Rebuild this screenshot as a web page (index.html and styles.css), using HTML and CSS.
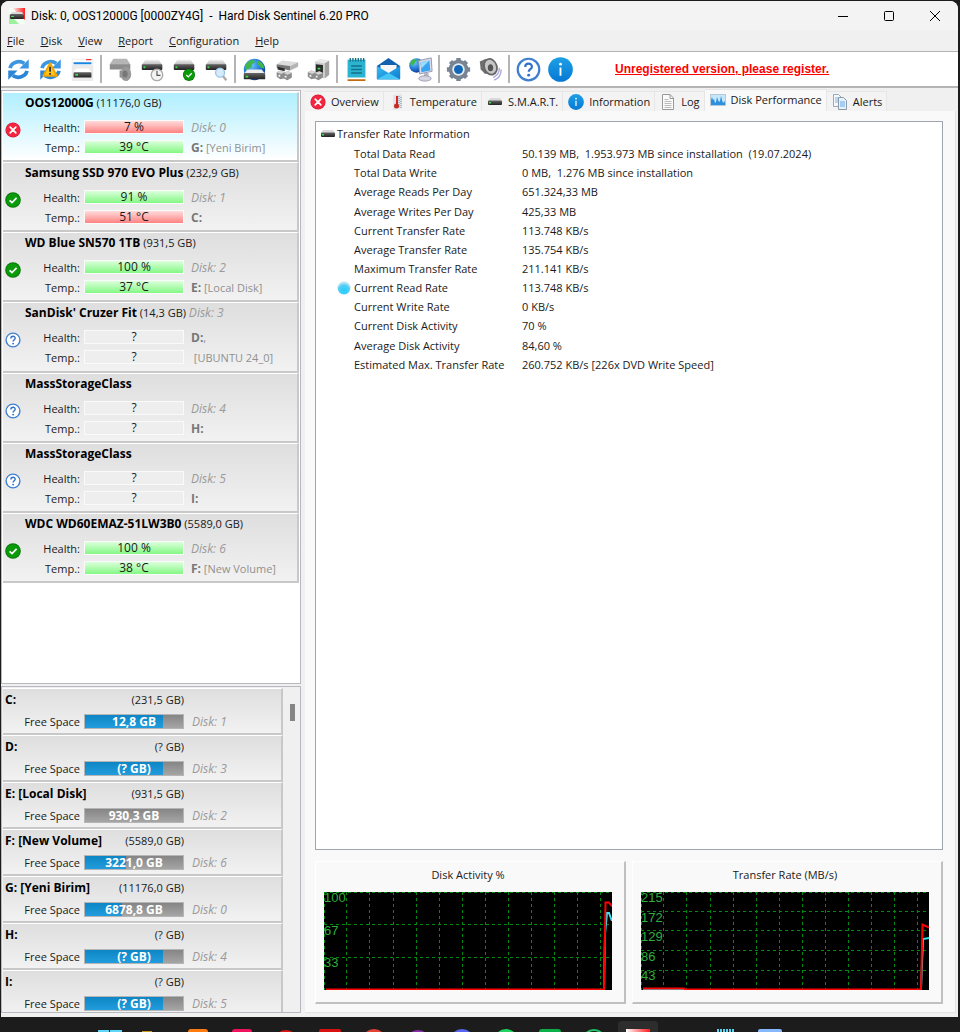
FILE: index.html
```html
<!DOCTYPE html>
<html lang="en">
<head>
  <meta charset="UTF-8">
  <meta name="viewport" content="width=device-width, initial-scale=1.0">
  <title>Hard Disk Sentinel 6.20 PRO</title>
  <link rel="stylesheet" href="styles.css">
</head>
<body>

<!-- Shared icons -->
<svg class="sprite" aria-hidden="true">
  <defs>
    <linearGradient id="gMetal" x1="0" y1="0" x2="0" y2="1"><stop offset="0" stop-color="#f2f2f2"/><stop offset="1" stop-color="#b5b5b5"/></linearGradient>
    <linearGradient id="gDark" x1="0" y1="0" x2="0" y2="1"><stop offset="0" stop-color="#666"/><stop offset="1" stop-color="#222"/></linearGradient>
    <linearGradient id="gBlue" x1="0" y1="0" x2="0" y2="1"><stop offset="0" stop-color="#1ea0e6"/><stop offset="1" stop-color="#0678d4"/></linearGradient>
    <linearGradient id="gMail" x1="0" y1="0" x2="1" y2="1"><stop offset="0" stop-color="#35bdf2"/><stop offset="1" stop-color="#1079d0"/></linearGradient>
    <linearGradient id="gRed" x1="0" y1="0" x2="1" y2="0"><stop offset="0" stop-color="#fff"/><stop offset="1" stop-color="#ff1a1a"/></linearGradient>
    <radialGradient id="gGlobe" cx="0.35" cy="0.3" r="0.8"><stop offset="0" stop-color="#6cc8ff"/><stop offset="0.6" stop-color="#1b6fd0"/><stop offset="1" stop-color="#0a2f80"/></radialGradient>
    <radialGradient id="gOrb" cx="0.5" cy="0.7" r="0.6"><stop offset="0" stop-color="#1fd0ff"/><stop offset="0.7" stop-color="#55cdf5"/><stop offset="1" stop-color="#b6e3f2"/></radialGradient>
  </defs>

  <symbol id="i-fail" viewBox="0 0 16 16">
    <circle cx="8" cy="8" r="7.6" fill="#d81f3a"/><circle cx="8" cy="8" r="6.8" fill="#f4263f"/>
    <path d="M5.2 5.2l5.6 5.6M10.8 5.2l-5.6 5.6" stroke="#fff" stroke-width="1.7" stroke-linecap="round"/>
  </symbol>
  <symbol id="i-ok" viewBox="0 0 16 16">
    <circle cx="8" cy="8" r="7.8" fill="#067a06"/><circle cx="8" cy="8" r="6.8" fill="#0a9a0a"/>
    <path d="M4.6 8.3l2.4 2.3 4.6-4.7" fill="none" stroke="#fff" stroke-width="1.7"/>
  </symbol>
  <symbol id="i-help" viewBox="0 0 16 16">
    <circle cx="8" cy="8" r="6.9" fill="#fff" stroke="#3f7fd0" stroke-width="1.4"/>
    <path d="M5.9 6.4c0-2.9 4.3-2.8 4.3-.2 0 1.5-2.1 1.7-2.1 3.3" fill="none" stroke="#3070c8" stroke-width="1.4"/>
    <circle cx="8.1" cy="11.6" r=".95" fill="#3070c8"/>
  </symbol>
  <symbol id="i-info" viewBox="0 0 16 16">
    <circle cx="8" cy="8" r="7.9" fill="url(#gBlue)"/>
    <circle cx="8" cy="4.6" r=".9" fill="#fff"/><path d="M8 6.7v5.3" stroke="#fff" stroke-width="1.2"/>
  </symbol>
  <symbol id="i-bay" viewBox="0 0 16 16">
    <path d="M3 4h10l2 3h-14z" fill="#d9d9d9"/><rect x="1" y="6.5" width="14" height="4.5" rx="1" fill="url(#gDark)"/>
    <rect x="2" y="8" width="2" height="1.5" fill="#39e04a"/>
  </symbol>
  <symbol id="i-refresh" viewBox="0 0 28 28">
    <path d="M4.5 12.5A10 9 0 0 1 20.5 7.3" fill="none" stroke="#3d97e0" stroke-width="4.2"/>
    <path d="M25.5 2.5v10.500h-10.500z" fill="#3d97e0"/>
    <path d="M23.5 15.5A10 9 0 0 1 7.5 20.7" fill="none" stroke="#2b86d6" stroke-width="4.2"/>
    <path d="M2.5 25.5v-10.500h10.500z" fill="#2b86d6"/>
  </symbol>
  <symbol id="i-drive" viewBox="0 0 28 28">
    <path d="M6 3h15l4 6h-23z" fill="url(#gMetal)"/><rect x="2" y="8" width="23" height="6.5" rx="1" fill="url(#gDark)"/>
    <rect x="4" y="10.5" width="2" height="2" fill="#39e04a"/>
  </symbol>
  <symbol id="i-globe" viewBox="0 0 28 28">
    <circle cx="14" cy="14" r="12" fill="url(#gGlobe)"/>
    <path d="M4 9c4-7 9-6 10-5 1 3-3 3-3 6s-3 1-4 4-4-1-3-5zM17 4c5 1 8 5 8 9l-4-1c-1-3-5-3-4-8z" fill="#41b649"/>
  </symbol>
  <symbol id="i-plugs" viewBox="0 0 28 28">
    <path d="M3 8l6-4 18 2-9 4z" fill="#dcdcdc"/><path d="M3 8l15 2v5l-15-3z" fill="#777"/><path d="M18 10l9-4v5l-9 4z" fill="#b4b4b4"/>
    <path d="M4 11l8 2v3l-8-2z" fill="#2a2a2a"/>
    <path d="M3 17l4-2 5 2 4-1 4 2v5l-5 3-4-2-4 1-4-3z" fill="#8d8d8d"/><path d="M3 17l4-2 5 2-4 2zM11 18l5-2 4 2-5 2z" fill="#d5d5d5"/>
    <path d="M5 20h2v2h-2zM12 21h2v2h-2z" fill="#f4f4f4"/>
  </symbol>
</svg>

<div class="window">
  <header class="titlebar">
    <svg class="app-icon" viewBox="0 0 16 16">
      <rect width="16" height="16" fill="#f4fff4"/><path d="M3 0h13v12z" fill="url(#gRed)"/><path d="M0 6v10h10z" fill="#9df09d"/>
      <path d="M3 4h10l2 3h-14z" fill="#d9d9d9"/><rect x="1" y="6" width="14" height="5" rx="1" fill="url(#gDark)"/><rect x="2" y="8" width="3" height="1" fill="#39e04a"/>
    </svg>
    <h1>Disk: 0, OOS12000G [0000ZY4G] &nbsp;-&nbsp; Hard Disk Sentinel 6.20 PRO</h1>
    <div class="controls">
      <button type="button" aria-label="Minimize"><svg viewBox="0 0 10 10"><path d="M0 5.5h10"/></svg></button>
      <button type="button" aria-label="Maximize"><svg viewBox="0 0 10 10"><rect x=".5" y=".5" width="9" height="9" rx="1"/></svg></button>
      <button type="button" aria-label="Close"><svg viewBox="0 0 10 10"><path d="M0 0l10 10M10 0l-10 10"/></svg></button>
    </div>
  </header>

  <nav class="menubar">
    <button type="button"><u>F</u>ile</button>
    <button type="button"><u>D</u>isk</button>
    <button type="button"><u>V</u>iew</button>
    <button type="button"><u>R</u>eport</button>
    <button type="button"><u>C</u>onfiguration</button>
    <button type="button"><u>H</u>elp</button>
  </nav>

  <div class="toolbar">
    <button type="button" aria-label="Refresh"><svg><use href="#i-refresh"/></svg></button>
    <button type="button" aria-label="Refresh all">
      <svg viewBox="0 0 28 28"><use href="#i-refresh"/><path d="M13.5 7l7.5 14h-15z" fill="#ffc61a" stroke="#f0a500" stroke-width="2" stroke-linejoin="round"/><path d="M13.5 11v5.5M13.5 18v2" stroke="#333" stroke-width="2"/></svg>
    </button>
    <button type="button" aria-label="Disk panel">
      <svg viewBox="0 0 28 28"><rect x="2" y="2" width="24" height="25" rx="1" fill="#ebebeb"/><rect x="3" y="3" width="22" height="6" fill="#fff"/><path d="M4 7h20" stroke="#1a86e0" stroke-width="2"/><path d="M18 3h6" stroke="#e33" stroke-width="1.5"/><path d="M7 13h14l3 4h-20z" fill="#fff"/><rect x="4" y="17" width="20" height="6" rx="1" fill="url(#gDark)"/><path d="M6 20h3" stroke="#39e04a" stroke-width="2"/></svg>
    </button>
    <span class="sep"></span>
    <button type="button" aria-label="Disk sound">
      <svg viewBox="0 0 28 28"><path d="M6 2h15l4 6h-23z" fill="#b5b5b5"/><rect x="2" y="8" width="23" height="6" fill="#8c8c8c"/><path d="M13 15h4l5-4v16l-5-4h-4z" fill="#8a8a8a"/><ellipse cx="20" cy="19" rx="6" ry="8" fill="#999"/><ellipse cx="19" cy="19" rx="3" ry="4" fill="#777"/></svg>
    </button>
    <button type="button" aria-label="Short self test">
      <svg viewBox="0 0 28 28"><use href="#i-drive"/><circle cx="19" cy="20" r="6.5" fill="#f4f4f4" stroke="#aaa" stroke-width="1.5"/><path d="M19 15.5v5h4" fill="none" stroke="#555" stroke-width="1.3"/></svg>
    </button>
    <button type="button" aria-label="Extended self test">
      <svg viewBox="0 0 28 28"><use href="#i-drive"/><use href="#i-ok" x="12" y="13" width="14" height="14"/></svg>
    </button>
    <button type="button" aria-label="Surface test">
      <svg viewBox="0 0 28 28"><use href="#i-drive"/><path d="M21 21l4 5" stroke="#aaa" stroke-width="2.5"/><circle cx="18" cy="17.5" r="5" fill="#d5edfb" stroke="#9cc4e4" stroke-width="1.5"/></svg>
    </button>
    <span class="sep"></span>
    <button type="button" aria-label="Network disks">
      <svg viewBox="0 0 28 28"><use href="#i-globe"/><path d="M6 14h16l4 5h-24z" fill="#eee"/><rect x="2" y="18" width="24" height="7" rx="1" fill="url(#gDark)"/><path d="M4 22h3" stroke="#39e04a" stroke-width="2"/></svg>
    </button>
    <button type="button" aria-label="Connect"><svg><use href="#i-plugs"/></svg></button>
    <button type="button" aria-label="Disconnect">
      <svg viewBox="0 0 28 28"><path d="M10 5l6-3 10 2-5 3z" fill="#e8e8e8"/><path d="M10 5l11 2v17l-11-3z" fill="#cfcfcf"/><path d="M21 7l5-3v16l-5 4z" fill="#a2a2a2"/><path d="M11 8l8 1v9l-8-1z" fill="#2a2a2a"/><path d="M13 13h3" stroke="#39e04a" stroke-width="2"/><path d="M2 17l4-2 5 2 4-1 4 2v5l-5 3-4-2-4 1-4-3z" fill="#8d8d8d"/><path d="M2 17l4-2 5 2-4 2zM10 18l5-2 4 2-5 2z" fill="#d5d5d5"/><path d="M4 20h2v2h-2zM11 21h2v2h-2z" fill="#f4f4f4"/></svg>
    </button>
    <span class="sep"></span>
    <button type="button" aria-label="Report">
      <svg viewBox="0 0 28 28"><rect x="4" y="3" width="20" height="21" fill="#2bb3cf"/><path d="M4 23h20v2h-20z" fill="#fff"/><path d="M4 26h20" stroke="#c46b12" stroke-width="2"/><path d="M7 1v4M10 1v4M13 1v4M16 1v4M19 1v4M22 1v4" stroke="#146c86" stroke-width="1.5"/><path d="M8 10h12M8 14h12M8 18h12" stroke="#12718c" stroke-width="1.7"/></svg>
    </button>
    <button type="button" aria-label="Send report">
      <svg viewBox="0 0 28 28"><path d="M1 10l13-9 13 9v15h-26z" fill="#1262ae"/><path d="M5 9h18v9h-18z" fill="#f7f7f7"/><path d="M1 10l13 8 13-8v15h-26z" fill="url(#gMail)"/><path d="M1 25l13-7 13 7z" fill="#45c7f5"/></svg>
    </button>
    <button type="button" aria-label="Online">
      <svg viewBox="0 0 28 28"><use href="#i-globe" width="19" height="19"/><path d="M12 4l14-3 1 15-14 3z" fill="#dcdce8" stroke="#8f8fae"/><path d="M14 6l10-2 1 11-10 2z" fill="#38a5f2"/><path d="M14 6l10-2-9 9z" fill="#9adcff"/><path d="M18 18h5v4h-5z" fill="#b5b5c8"/><ellipse cx="19" cy="24" rx="7" ry="3" fill="#d5d5e2" stroke="#9898ad"/></svg>
    </button>
    <span class="sep"></span>
    <button type="button" aria-label="Settings">
      <svg viewBox="0 0 28 28"><path d="M14 1v26M1 14h26M5 5l18 18M23 5l-18 18" stroke="#788492" stroke-width="5"/><circle cx="14" cy="14" r="11" fill="#788492"/><circle cx="14" cy="14" r="7" fill="#e7edf3"/><circle cx="14" cy="14" r="5" fill="#1268b6"/></svg>
    </button>
    <button type="button" aria-label="Sound">
      <svg viewBox="0 0 28 28"><path d="M2 5l7-3 4 3v13l-5 1-5-5z" fill="#6f6f6f"/><ellipse cx="14" cy="11" rx="8" ry="10" fill="#666" transform="rotate(-20 14 11)"/><ellipse cx="14" cy="11" rx="6" ry="8" fill="#c6c6c6" transform="rotate(-20 14 11)"/><ellipse cx="14" cy="12" rx="3" ry="4" fill="#555"/><path d="M24 12q0 8-7 11M26 14q0 9-8 12" fill="none" stroke="#a6a6da" stroke-width="1.5"/></svg>
    </button>
    <span class="sep"></span>
    <button type="button" aria-label="Help"><svg><use href="#i-help"/></svg></button>
    <button type="button" aria-label="About"><svg><use href="#i-info"/></svg></button>
    <a class="register" href="#register">Unregistered version, please register.</a>
  </div>

  <div class="content">
    <aside class="sidebar">
      <ul class="disks">
        <li class="disk selected">
          <div class="name"><b>OOS12000G</b> (11176,0 GB)</div>
          <svg class="status"><use href="#i-fail"/></svg>
          <span class="label">Health:</span><span class="bar bad">7 %</span><i>Disk: 0</i>
          <span class="label">Temp.:</span><span class="bar good">39 °C</span><span class="vol"><b>G:</b> [Yeni Birim]</span>
        </li>
        <li class="disk">
          <div class="name"><b>Samsung SSD 970 EVO Plus</b> (232,9 GB)</div>
          <svg class="status"><use href="#i-ok"/></svg>
          <span class="label">Health:</span><span class="bar good">91 %</span><i>Disk: 1</i>
          <span class="label">Temp.:</span><span class="bar bad">51 °C</span><span class="vol"><b>C:</b></span>
        </li>
        <li class="disk">
          <div class="name"><b>WD Blue SN570 1TB</b> (931,5 GB)</div>
          <svg class="status"><use href="#i-ok"/></svg>
          <span class="label">Health:</span><span class="bar good">100 %</span><i>Disk: 2</i>
          <span class="label">Temp.:</span><span class="bar good">37 °C</span><span class="vol"><b>E:</b> [Local Disk]</span>
        </li>
        <li class="disk">
          <div class="name"><b>SanDisk' Cruzer Fit</b> (14,3 GB) <i>Disk: 3</i></div>
          <svg class="status"><use href="#i-help"/></svg>
          <span class="label">Health:</span><span class="bar">?</span><span class="vol"><b>D:</b>,</span>
          <span class="label">Temp.:</span><span class="bar">?</span><span class="vol">&nbsp;[UBUNTU 24_0]</span>
        </li>
        <li class="disk">
          <div class="name"><b>MassStorageClass</b></div>
          <svg class="status"><use href="#i-help"/></svg>
          <span class="label">Health:</span><span class="bar">?</span><i>Disk: 4</i>
          <span class="label">Temp.:</span><span class="bar">?</span><span class="vol"><b>H:</b></span>
        </li>
        <li class="disk">
          <div class="name"><b>MassStorageClass</b></div>
          <svg class="status"><use href="#i-help"/></svg>
          <span class="label">Health:</span><span class="bar">?</span><i>Disk: 5</i>
          <span class="label">Temp.:</span><span class="bar">?</span><span class="vol"><b>I:</b></span>
        </li>
        <li class="disk">
          <div class="name"><b>WDC WD60EMAZ-51LW3B0</b> (5589,0 GB)</div>
          <svg class="status"><use href="#i-ok"/></svg>
          <span class="label">Health:</span><span class="bar good">100 %</span><i>Disk: 6</i>
          <span class="label">Temp.:</span><span class="bar good">38 °C</span><span class="vol"><b>F:</b> [New Volume]</span>
        </li>
      </ul>

      <div class="drives-panel">
        <ul class="drives">
          <li class="drive">
            <div class="drive-head"><b>C:</b><span>(231,5 GB)</span></div>
            <div class="drive-row"><span class="label">Free Space</span><span class="space"><span class="used" style="width:80%"></span><b>12,8 GB</b></span><i>Disk: 1</i></div>
          </li>
          <li class="drive">
            <div class="drive-head"><b>D:</b><span>(? GB)</span></div>
            <div class="drive-row"><span class="label">Free Space</span><span class="space"><span class="used" style="width:80%"></span><b>(? GB)</b></span><i>Disk: 3</i></div>
          </li>
          <li class="drive">
            <div class="drive-head"><b>E: [Local Disk]</b><span>(931,5 GB)</span></div>
            <div class="drive-row"><span class="label">Free Space</span><span class="space"><span class="used" style="width:0%"></span><b>930,3 GB</b></span><i>Disk: 2</i></div>
          </li>
          <li class="drive">
            <div class="drive-head"><b>F: [New Volume]</b><span>(5589,0 GB)</span></div>
            <div class="drive-row"><span class="label">Free Space</span><span class="space"><span class="used" style="width:42%"></span><b>3221,0 GB</b></span><i>Disk: 6</i></div>
          </li>
          <li class="drive">
            <div class="drive-head"><b>G: [Yeni Birim]</b><span>(11176,0 GB)</span></div>
            <div class="drive-row"><span class="label">Free Space</span><span class="space"><span class="used" style="width:38%"></span><b>6878,8 GB</b></span><i>Disk: 0</i></div>
          </li>
          <li class="drive">
            <div class="drive-head"><b>H:</b><span>(? GB)</span></div>
            <div class="drive-row"><span class="label">Free Space</span><span class="space"><span class="used" style="width:80%"></span><b>(? GB)</b></span><i>Disk: 4</i></div>
          </li>
          <li class="drive">
            <div class="drive-head"><b>I:</b><span>(? GB)</span></div>
            <div class="drive-row"><span class="label">Free Space</span><span class="space"><span class="used" style="width:80%"></span><b>(? GB)</b></span><i>Disk: 5</i></div>
          </li>
        </ul>
        <div class="scrollbar"><span class="thumb"></span></div>
      </div>
    </aside>

    <main class="main">
      <div class="tabs" role="tablist">
        <button type="button" role="tab"><svg><use href="#i-fail"/></svg>Overview</button>
        <button type="button" role="tab">
          <svg viewBox="0 0 16 16"><path d="M4 1l9-1v14l-9 2z" fill="#dfe5ea"/><path d="M10 2v12M12 3v11" stroke="#7892a3" stroke-dasharray="1 1"/><path d="M8 2v9" stroke="#d22" stroke-width="2"/><circle cx="7.5" cy="12" r="2.5" fill="#c62a20"/></svg>
          Temperature
        </button>
        <button type="button" role="tab"><svg><use href="#i-bay"/></svg>S.M.A.R.T.</button>
        <button type="button" role="tab"><svg><use href="#i-info"/></svg>Information</button>
        <button type="button" role="tab">
          <svg viewBox="0 0 16 16"><path d="M2.5.5h7.5l3.5 3.5v11.5h-11z" fill="#fafafa" stroke="#999"/><path d="M10 .5v4h3.5" fill="none" stroke="#999"/><path d="M4.5 5.5h4M4.5 7.5h7M4.5 9.5h7M4.5 11.5h7M4.5 13.5h7" stroke="#bbb"/></svg>
          Log
        </button>
        <button type="button" role="tab" aria-selected="true" class="active">
          <svg viewBox="0 0 16 16"><rect x=".5" y="2.5" width="15" height="11" fill="#c6e6fa" stroke="#b5c9d6"/><path d="M1 13v-5l1-3 1 3 1-1 1 4 1-1 1-5 1 3 1 2 1-1 1-5 1 4 1 3 2-2v4z" fill="#2e8fdd"/></svg>
          Disk Performance
        </button>
        <button type="button" role="tab">
          <svg viewBox="0 0 16 16"><path d="M1.5.5h5l3 3v9h-8z" fill="#f5f9fd" stroke="#9aa9b8"/><path d="M3 4h4M3 6h4M3 8h4" stroke="#7db2e8"/><path d="M6.5 3.5h5l3 3v9h-8z" fill="#e5f1fd" stroke="#8b9aa9"/><path d="M8 8h5M8 10h5M8 12h5" stroke="#6aa7e8"/></svg>
          Alerts
        </button>
      </div>

      <div class="tab-page">
        <section class="info">
          <h2><svg><use href="#i-bay"/></svg>Transfer Rate Information</h2>
          <table>
            <tr><th scope="row">Total Data Read</th><td>50.139 MB, &nbsp;1.953.973 MB since installation &nbsp;(19.07.2024)</td></tr>
            <tr><th scope="row">Total Data Write</th><td>0 MB, &nbsp;1.276 MB since installation</td></tr>
            <tr><th scope="row">Average Reads Per Day</th><td>651.324,33 MB</td></tr>
            <tr><th scope="row">Average Writes Per Day</th><td>425,33 MB</td></tr>
            <tr><th scope="row">Current Transfer Rate</th><td>113.748 KB/s</td></tr>
            <tr><th scope="row">Average Transfer Rate</th><td>135.754 KB/s</td></tr>
            <tr><th scope="row">Maximum Transfer Rate</th><td>211.141 KB/s</td></tr>
            <tr><th scope="row" class="current"><svg viewBox="0 0 14 14"><circle cx="7" cy="7" r="6.5" fill="url(#gOrb)"/></svg>Current Read Rate</th><td>113.748 KB/s</td></tr>
            <tr><th scope="row">Current Write Rate</th><td>0 KB/s</td></tr>
            <tr><th scope="row">Current Disk Activity</th><td>70 %</td></tr>
            <tr><th scope="row">Average Disk Activity</th><td>84,60 %</td></tr>
            <tr><th scope="row">Estimated Max. Transfer Rate</th><td>260.752 KB/s [226x DVD Write Speed]</td></tr>
          </table>
        </section>

        <div class="graphs">
          <section class="graph">
            <h3>Disk Activity %</h3>
            <div class="plot">
              <svg viewBox="0 0 288 98" preserveAspectRatio="none">
                <path class="grid" d="M.5 0v98M22.5 0v98M45.5 0v98M69.5 0v98M92.5 0v98M115.5 0v98M138.5 0v98M161.5 0v98M184.5 0v98M207.5 0v98M230.5 0v98M253.5 0v98M276.5 0v98M0 .5h288M0 32.5h288M0 65.5h288"/>
                <path class="avg" d="M280 97l1-55 2-21h2l3 8"/>
                <path class="cur" d="M2 97.5h278l1.5-87h3.5l3 4"/>
              </svg>
              <div class="scale"><span>100</span><span>67</span><span>33</span></div>
            </div>
          </section>
          <section class="graph">
            <h3>Transfer Rate (MB/s)</h3>
            <div class="plot">
              <svg viewBox="0 0 288 98" preserveAspectRatio="none">
                <path class="grid" d="M.5 0v98M22.5 0v98M45.5 0v98M69.5 0v98M92.5 0v98M115.5 0v98M138.5 0v98M161.5 0v98M184.5 0v98M207.5 0v98M230.5 0v98M253.5 0v98M276.5 0v98M0 .5h288M0 19.5h288M0 38.5h288M0 58.5h288M0 78.5h288"/>
                <path class="avg" d="M2 97.5h41M280 97l2-50 6-1"/>
                <path class="cur" d="M2 96.5h41l1 1h236l1.5-65 6.5 3"/>
              </svg>
              <div class="scale"><span>215</span><span>172</span><span>129</span><span>86</span><span>43</span></div>
            </div>
          </section>
        </div>
      </div>
    </main>
  </div>
</div>

<!-- Upper edge of the desktop taskbar -->
<footer class="taskbar">
  <button type="button" aria-label="Start"><svg viewBox="0 0 24 24"><path d="M0 1h11v11h-11zM12 1h12v11h-12z" fill="#5fd6f8"/></svg></button>
  <button type="button" aria-label="Files"><svg viewBox="0 0 24 24"><path d="M0 2h10v5h-10z" fill="#c99a1e"/></svg></button>
  <button type="button" aria-label="App 1"><svg viewBox="0 0 24 24"><rect x="2" width="20" height="20" rx="3" fill="#ff7a0f"/></svg></button>
  <button type="button" aria-label="App 2"><svg viewBox="0 0 24 24"><rect x="2" width="20" height="20" rx="3" fill="#f0135c"/></svg></button>
  <button type="button" aria-label="App 3"><svg viewBox="0 0 24 24"><circle cx="12" cy="13" r="12" fill="#d81818"/></svg></button>
  <button type="button" aria-label="App 4"><svg viewBox="0 0 24 24"><rect x="1" width="22" height="20" rx="2" fill="#d81010"/></svg></button>
  <button type="button" aria-label="Browser"><svg viewBox="0 0 24 24"><circle cx="12" cy="12" r="12" fill="#e34334"/></svg></button>
  <button type="button" aria-label="App 5"><svg viewBox="0 0 24 24"><circle cx="12" cy="13" r="12" fill="#8b2fa8"/></svg></button>
  <button type="button" aria-label="App 6"><svg viewBox="0 0 24 24"><circle cx="12" cy="12" r="12" fill="#5865f2"/></svg></button>
  <button type="button" aria-label="App 7"><svg viewBox="0 0 24 24"><circle cx="12" cy="12" r="12" fill="#1fd760"/></svg></button>
  <button type="button" aria-label="App 8"><svg viewBox="0 0 24 24"><rect x="1" width="22" height="20" rx="3" fill="#0cae48"/></svg></button>
  <button type="button" aria-label="App 9"><svg viewBox="0 0 24 24"><circle cx="12" cy="12" r="11" fill="#1c1c1c" stroke="#25c268" stroke-width="2"/></svg></button>
  <button type="button" aria-label="Hard Disk Sentinel" class="active"><svg viewBox="0 0 24 24"><rect width="24" height="24" fill="url(#gRed)"/></svg></button>
  <span class="gap"></span>
  <button type="button" aria-label="Notepad"><svg viewBox="0 0 24 24"><path d="M3 2h18" stroke="#59d2ee" stroke-width="4" stroke-dasharray="2 1"/></svg></button>
  <button type="button" aria-label="App 10"><svg viewBox="0 0 24 24"><rect width="24" height="20" rx="2" fill="#86b8ff"/></svg></button>
</footer>

</body>
</html>
```
FILE: styles.css
```css
* {
  box-sizing: border-box;
}

body {
  margin: 0;
  height: 100vh;
  display: flex;
  flex-direction: column;
  overflow: hidden;
  background: #1c1c1c;
  color: #1a1a1a;
  font-family: "Open Sans", "Noto Sans", sans-serif;
  font-size: 11px;
  line-height: 20px;
}

button {
  font: inherit;
  color: inherit;
  background: none;
  border: none;
  padding: 0;
}

ul {
  list-style: none;
  margin: 0;
  padding: 0;
}

h1, h2, h3 {
  margin: 0;
  font-size: 11px;
  font-weight: normal;
}

svg {
  display: block;
  flex: none;
}

.sprite {
  position: absolute;
  width: 0;
  height: 0;
}

/* Window frame */
.window {
  flex: 1;
  min-height: 0;
  display: flex;
  flex-direction: column;
  margin: 1px 2px 0 1px;
  background: #f0f0f0;
  border-radius: 8px 8px 0 0;
  overflow: hidden;
}

.titlebar {
  display: flex;
  align-items: center;
  height: 29px;
  padding-left: 8px;
  gap: 6px;
  background: #f3f3f3;
}

.app-icon {
  width: 16px;
  height: 16px;
}

.titlebar h1 {
  flex: 1;
  font-family: Roboto, "Open Sans", sans-serif;
  font-size: 12px;
  color: #000;
}

.controls {
  display: flex;
}

.controls button {
  width: 46px;
  height: 28px;
  display: flex;
  align-items: center;
  justify-content: center;
}

.controls svg {
  width: 10px;
  height: 10px;
  fill: none;
  stroke: #000;
  overflow: visible;
}

.menubar {
  display: flex;
  height: 22px;
  padding-left: 6px;
  gap: 16px;
  border-bottom: 1px solid #b4b4b4;
}

/* Toolbar */
.toolbar {
  display: flex;
  align-items: center;
  height: 36px;
  padding-left: 1px;
  background: #fff;
  border-bottom: 2px solid #b4b4b4;
}

.toolbar button {
  width: 32px;
  height: 32px;
  display: flex;
  align-items: center;
  justify-content: center;
}

.toolbar button svg {
  width: 25px;
  height: 25px;
}

.sep {
  width: 2px;
  height: 28px;
  margin: 0 2px;
  background: #b4b4b4;
}

.register {
  margin-left: 39px;
  font: bold 12px "Liberation Sans", Arial, sans-serif;
  color: #f00;
}

/* Two columns */
.content {
  flex: 1;
  min-height: 0;
  display: flex;
  gap: 4px;
  padding: 1px 2px 4px 0;
}

.sidebar {
  width: 300px;
  flex: none;
  display: flex;
  flex-direction: column;
  gap: 2px;
  padding-top: 1px;
}

.sidebar i {
  font-size: 12px;
  color: #9a9a9a;
}

.sidebar b {
  font-size: 12px;
}

/* Physical disks */
.disks {
  flex: 1;
  display: flex;
  flex-direction: column;
  padding: 1px 1px 100px;
  background: #fff;
  border: 1px solid #b8b8c0;
}

.disk {
  flex: 1;
  display: grid;
  grid-template-columns: 16px 55px 100px 1fr;
  grid-template-rows: 25px 20px 20px;
  column-gap: 4px;
  padding-left: 2px;
  background: linear-gradient(#dedede, #f2f2f2);
  border: solid;
  border-width: 1px 2px 2px 0;
  border-color: #fff #c8c8c8 #c8c8c8;
}

.disk.selected {
  background: linear-gradient(#b0efff, #fff);
}

.name {
  grid-column: 2 / -1;
}

.name b,
.drive-head b {
  color: #000;
}

.status {
  grid-row: 2;
  width: 16px;
  height: 16px;
  align-self: end;
}

.label {
  text-align: right;
}

.disk .label {
  grid-column: 2;
}

.disk > i,
.vol {
  padding-left: 3px;
}

.vol {
  color: #909090;
  white-space: nowrap;
}

.vol b {
  color: #777;
}

.bar {
  height: 14px;
  margin-top: 2px;
  font-size: 12px;
  line-height: 12px;
  text-align: center;
  background: #eee;
  border: 1px solid #fafafa;
}

.bar.good {
  background: linear-gradient(#dcffdc, #84f884);
}

.bar.bad {
  background: linear-gradient(#ffdcdc, #ff8282);
}

/* Logical drives */
.drives-panel {
  height: 327px;
  display: flex;
  overflow: hidden;
  padding: 1px;
  border: 1px solid #b8b8c0;
}

.drives {
  flex: 1;
}

.drive {
  height: 47px;
  padding: 1px 2px;
  background: linear-gradient(#dedede, #f2f2f2);
  border: solid;
  border-width: 1px 2px 2px 0;
  border-color: #fff #c8c8c8 #c8c8c8;
}

.drive-head {
  display: flex;
  justify-content: space-between;
  width: 179px;
}

.drive-row {
  display: grid;
  grid-template-columns: 75px 100px 1fr;
  column-gap: 4px;
  margin-top: 2px;
}

.drive-row i {
  padding-left: 4px;
}

.space {
  position: relative;
  height: 15px;
  margin-top: 2px;
  line-height: 13px;
  text-align: center;
  background: linear-gradient(#858585, #a5a5a5);
  border: 1px solid #b5b5b5;
}

.used {
  position: absolute;
  left: 0;
  top: 0;
  bottom: 0;
  background: linear-gradient(#0e86c6, #229cdc);
}

.space b {
  position: relative;
  color: #fff;
}

.scrollbar {
  width: 16px;
  padding: 16px 4px 0 7px;
}

.thumb {
  display: block;
  width: 5px;
  height: 17px;
  background: #858585;
}

/* Tabs */
.main {
  flex: 1;
  min-width: 0;
  display: flex;
  flex-direction: column;
}

.tabs {
  display: flex;
  align-items: flex-end;
  height: 22px;
}

.tabs button {
  display: flex;
  align-items: center;
  gap: 5px;
  height: 20px;
  padding: 0 4px 0 5px;
  background: #f3f3f3;
  border: 1px solid #e6e6e6;
  border-bottom: none;
  border-left: none;
  white-space: nowrap;
}

.tabs button.active {
  height: 22px;
  padding-bottom: 2px;
  background: #f9f9f9;
}

.tabs svg {
  width: 16px;
  height: 16px;
}

.tab-page {
  flex: 1;
  display: flex;
  flex-direction: column;
  gap: 11px;
  padding: 10px 12px 8px 10px;
  background: #f9f9f9;
  border: solid #e2e2e2;
  border-width: 0 1px 1px 0;
}

.info {
  flex: 1;
  padding: 2px 4px;
  background: #fff;
  border: 1px solid #a0a4ac;
}

.info h2 {
  display: flex;
  align-items: center;
  gap: 1px;
}

.info h2 svg {
  width: 16px;
  height: 16px;
}

.info table {
  height: 230px;
  margin-left: 34px;
  border-collapse: collapse;
  line-height: 19px;
}

.info th {
  width: 168px;
  padding: 0;
  font-weight: normal;
  text-align: left;
}

.info td {
  padding: 0;
}

.current {
  position: relative;
}

.current svg {
  position: absolute;
  left: -17px;
  top: 3px;
  width: 14px;
  height: 14px;
}

/* Graphs */
.graphs {
  display: grid;
  grid-template-columns: 1fr 1fr;
  gap: 6px;
}

.graph {
  padding: 3px 12px 12px 8px;
  border: solid;
  border-width: 1px 2px 2px 1px;
  border-color: #fff #c0c0c0 #c0c0c0 #fff;
}

.graph h3 {
  margin-bottom: 7px;
  text-align: center;
}

.plot {
  position: relative;
  height: 98px;
  background: #000;
}

.plot svg {
  width: 100%;
  height: 100%;
  fill: none;
}

.grid {
  stroke: #008a10;
  stroke-dasharray: 3 3;
}

.avg {
  stroke: #2ee6f2;
  stroke-width: 2;
}

.cur {
  stroke: #f00;
  stroke-width: 2;
}

.scale {
  position: absolute;
  left: 0;
  top: 0;
  bottom: 0;
  display: flex;
  flex-direction: column;
  align-items: flex-start;
  font: 13px "Liberation Sans", Arial, sans-serif;
  line-height: 12px;
  color: #2fae3c;
}

.scale span {
  flex: 1;
}

/* Taskbar */
.taskbar {
  display: flex;
  align-items: flex-start;
  height: 15px;
  padding-left: 88px;
  overflow: hidden;
}

.taskbar button,
.gap {
  display: flex;
  align-items: flex-start;
  width: 44px;
  height: 44px;
  padding: 12px 10px 0;
}

.taskbar .active {
  width: 40px;
  margin: 4px 2px 0;
  padding: 8px 8px 0;
  background: #2d2d2d;
  border-radius: 4px;
}

.taskbar svg {
  width: 24px;
  height: 24px;
}
```
